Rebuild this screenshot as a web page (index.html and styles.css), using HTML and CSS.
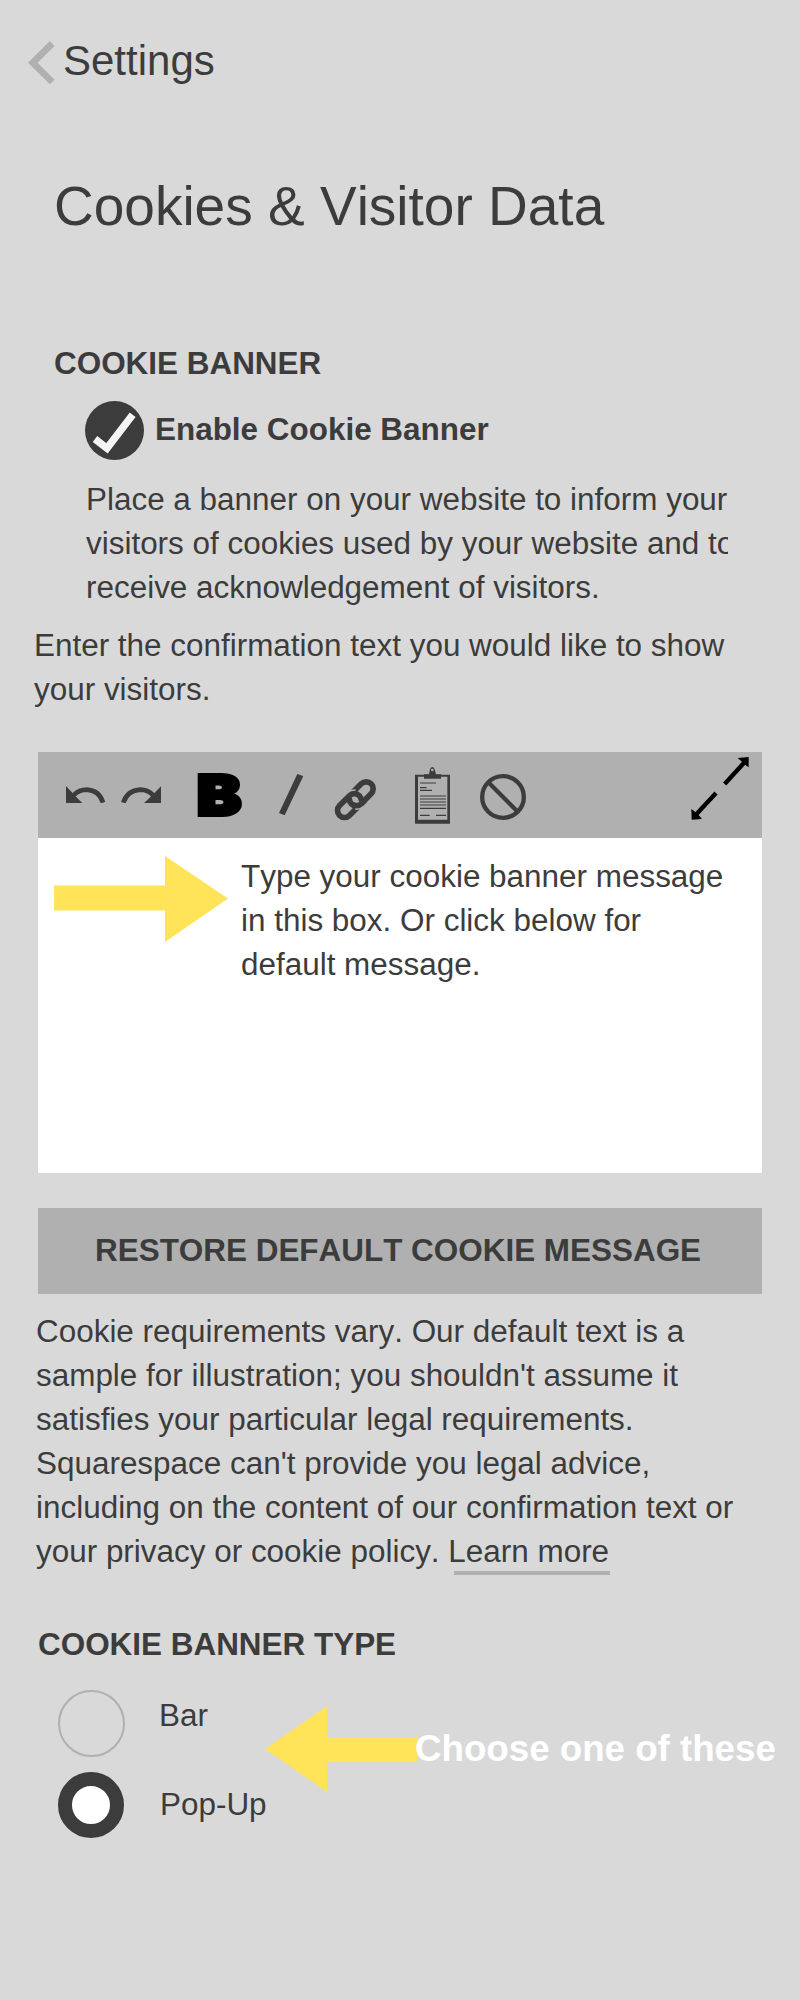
FILE: index.html
```html
<!DOCTYPE html>
<html lang="en">
<head>
    <meta charset="UTF-8">
    <meta name="viewport" content="width=device-width, initial-scale=1.0">
    <title>Cookies &amp; Visitor Data</title>
    <link rel="stylesheet" href="styles.css">
</head>
<body>
    <div class="panel">
        <header class="back">
            <svg class="back-icon" viewBox="0 0 80 130"><path d="M0 65L66 0L80 15L29 65L80 117L66 130Z"/></svg>
            <span>Settings</span>
        </header>

        <h1>Cookies &amp; Visitor Data</h1>

        <h2 class="banner-title">COOKIE BANNER</h2>
        <div class="enable">
            <svg class="check" viewBox="0 0 177 177">
                <circle cx="88.5" cy="88.5" r="88.5" fill="#3c3c3c"/>
                <path d="M30 114L66 142L143 41" fill="none" stroke="#f4f4f4" stroke-width="22"/>
            </svg>
            <span>Enable Cookie Banner</span>
        </div>
        <p class="enable-text">Place a banner on your website to inform your<br>visitors of cookies used by your website and to<br>receive acknowledgement of visitors.</p>
        <p class="confirm-text">Enter the confirmation text you would like to show<br>your visitors.</p>

        <div class="editor">
            <div class="toolbar">
                <svg class="undo" viewBox="0 0 117 53">
                    <path d="M0 0V52H50L33 35Z"/>
                    <path d="M22 28Q40 11 62 11Q100 13 111 50" fill="none" stroke="#3c3c3c" stroke-width="14"/>
                </svg>
                <svg class="redo" viewBox="0 0 121 53">
                    <path d="M121 0V52H68L86 35Z"/>
                    <path d="M97 28Q80 11 58 11Q19 13 7 50" fill="none" stroke="#3c3c3c" stroke-width="14"/>
                </svg>
                <span class="bold">B</span>
                <svg class="italic" viewBox="0 0 73 124"><path d="M55 0L73 6L17 124L0 117Z"/></svg>
                <svg class="link" viewBox="0 0 128 130">
                    <g fill="none" stroke="#3c3c3c" stroke-width="17" transform="translate(64 65) rotate(-45)">
                        <rect x="-17" y="-21" width="84" height="42" rx="21"/>
                        <path d="M-4 -21A21 21 0 0 1 12 -13" stroke="#b0b0b0" stroke-width="26"/>
                        <rect x="-67" y="-21" width="84" height="42" rx="21"/>
                        <path d="M-12 13A21 21 0 0 0 4 21" stroke="#b0b0b0" stroke-width="26"/>
                        <path d="M-17 0A21 21 0 0 0 4 21H20"/>
                    </g>
                </svg>
                <svg class="clipboard" viewBox="0 0 105 170">
                    <path fill-rule="evenodd" d="M0 23H105V170H0ZM9 29V158H97V29Z"/>
                    <path d="M27 22H42L45 7Q52 -7 59 7L63 22H78V35H27Z"/>
                    <circle cx="52" cy="9" r="4" fill="#b0b0b0"/>
                    <path d="M15 48H63M15 62H35M15 70H51M15 87H93M15 96H93M15 105H93M15 114H93M15 124H93M15 145H44M63 145H93" stroke="#3c3c3c" stroke-width="3.5"/>
                </svg>
                <svg class="clear" viewBox="0 0 138 138">
                    <g fill="none" stroke="#3c3c3c" stroke-width="13">
                        <circle cx="69" cy="69" r="62.5"/>
                        <path d="M25 25L113 113"/>
                    </g>
                </svg>
                <svg class="expand" viewBox="0 0 174 189">
                    <path d="M101 81L162 14M75 108L14 174" stroke="#000" stroke-width="13"/>
                    <path d="M140 3L173 0V31L160 22L151 13ZM1 156L14 166L23 174L33 186L2 188Z" fill="#000"/>
                </svg>
            </div>
            <div class="message">
                <svg class="arrow-right" viewBox="0 0 174 86"><path d="M0 29.5H111V0L174 42.5L111 86V54.5H0Z"/></svg>
                <p>Type your cookie banner message<br>in this box. Or click below for<br>default message.</p>
            </div>
        </div>

        <button class="restore">RESTORE DEFAULT COOKIE MESSAGE</button>

        <p class="legal">Cookie requirements vary. Our default text is a<br>sample for illustration; you shouldn't assume it<br>satisfies your particular legal requirements.<br>Squarespace can't provide you legal advice,<br>including on the content of our confirmation text or<br>your privacy or cookie policy. <a class="learn">Learn more</a></p>

        <h2 class="type-title">COOKIE BANNER TYPE</h2>
        <div class="types">
            <div class="options">
                <div class="option"><span class="radio"></span><span class="bar-label">Bar</span></div>
                <div class="option"><span class="radio selected"></span><span class="popup-label">Pop-Up</span></div>
            </div>
            <div class="hint">
                <svg class="arrow-left" viewBox="0 0 152 86"><path d="M0 43L62 0V31H152V56H62V86Z"/></svg>
                <span>Choose one of these</span>
            </div>
        </div>
    </div>
</body>
</html>
```
FILE: styles.css
```css
* {
    box-sizing: border-box;
}
body {
    margin: 0;
    background-color: #d9d9d9;
    color: #3c3c3c;
    font-family: "Liberation Sans", Arial, sans-serif;
    font-size: 31.45px;
    font-kerning: none;
    line-height: 44px;
}
.panel {
    width: 800px;
    height: 2000px;
    padding-top: 36px;
    overflow: hidden;
}
h1, h2, p {
    margin: 0;
    white-space: nowrap;
}
svg {
    display: block;
    flex: none;
    fill: #3c3c3c;
}
.back {
    display: flex;
    height: 48px;
    padding-left: 28px;
    font-size: 42px;
    line-height: 50px;
}
.back-icon {
    width: 26.5px;
    height: 43.3px;
    margin: 5px 8.5px 0 0;
    fill: #b0b0b0;
}
h1 {
    margin: 90px 0 0 54px;
    font-size: 55px;
    font-weight: normal;
    line-height: 64px;
}
h2 {
    font-size: 31.45px;
    line-height: 44px;
}
.banner-title {
    margin: 104px 0 0 54px;
}
.enable {
    display: flex;
    height: 59px;
    margin: 15px 0 0 85px;
    gap: 11px;
    font-weight: bold;
}
.enable span {
    padding-top: 7px;
}
.check {
    width: 59px;
    height: 59px;
}
.enable-text {
    width: 642px;
    margin: 18px 0 0 86px;
    overflow: hidden;
}
.confirm-text {
    margin: 14px 0 0 34px;
}
.editor {
    width: 724px;
    height: 421px;
    margin: 40px 0 0 38px;
    background-color: #fff;
}
.toolbar {
    display: flex;
    align-items: flex-start;
    height: 86px;
    padding-left: 28px;
    background-color: #b0b0b0;
}
.undo {
    width: 39px;
    height: 17.7px;
    margin-top: 33.7px;
}
.redo {
    width: 40.3px;
    height: 17.7px;
    margin: 33.7px 0 0 15.7px;
}
.bold {
    width: 46px;
    height: 86px;
    margin-left: 36px;
    color: #000;
    font-family: Inter, sans-serif;
    font-size: 55px;
    font-weight: 900;
    line-height: 86px;
    -webkit-text-stroke: 4px #000;
    transform: scaleX(1.2);
    transform-origin: 0 0;
}
.italic {
    width: 24.3px;
    height: 41.3px;
    margin: 21.7px 0 0 35.7px;
}
.link {
    width: 42.7px;
    height: 43.3px;
    margin: 25.7px 0 0 31px;
}
.clipboard {
    width: 35px;
    height: 56.7px;
    margin: 15.3px 0 0 38.3px;
}
.clear {
    width: 46px;
    height: 46px;
    margin: 22px 0 0 30px;
}
.expand {
    width: 58px;
    height: 63px;
    margin: 5px 0 0 165px;
}
.message {
    display: flex;
    padding: 17px 0 0 16px;
}
.arrow-right {
    width: 174px;
    height: 86px;
    margin: 1px 13px 0 0;
    fill: #ffe359;
}
.restore {
    display: block;
    width: 724px;
    height: 86px;
    margin: 35px 0 0 38px;
    padding: 0 0 0 57px;
    border: none;
    background-color: #b0b0b0;
    color: #3c3c3c;
    font: bold 31.45px/86px "Liberation Sans", Arial, sans-serif;
    font-kerning: none;
    text-align: left;
    white-space: nowrap;
}
.legal {
    margin: 16px 0 0 36px;
}
.learn {
    padding: 0 3px 6px 0;
    background: linear-gradient(#b0b0b0, #b0b0b0) 6px 100% / 156px 4px no-repeat;
}
.type-title {
    margin: 49px 0 0 38px;
}
.types {
    display: flex;
    margin: 23px 0 0 58px;
}
.options {
    width: 207px;
    white-space: nowrap;
}
.option {
    display: flex;
    height: 67px;
    margin-bottom: 15px;
}
.radio {
    flex: none;
    width: 67px;
    height: 67px;
    border: 2px solid #b0b0b0;
    border-radius: 50%;
}
.selected {
    width: 66px;
    height: 66px;
    border: 14px solid #3c3c3c;
    background-color: #fff;
}
.bar-label {
    padding: 4px 0 0 34px;
}
.popup-label {
    padding: 11px 0 0 36px;
}
.hint {
    display: flex;
    margin-top: 16px;
    color: #fff;
    font-size: 36.7px;
    font-weight: bold;
    white-space: nowrap;
}
.hint span {
    margin-left: -2px;
    padding-top: 21px;
}
.arrow-left {
    width: 152px;
    height: 86px;
    fill: #ffe359;
}
```
